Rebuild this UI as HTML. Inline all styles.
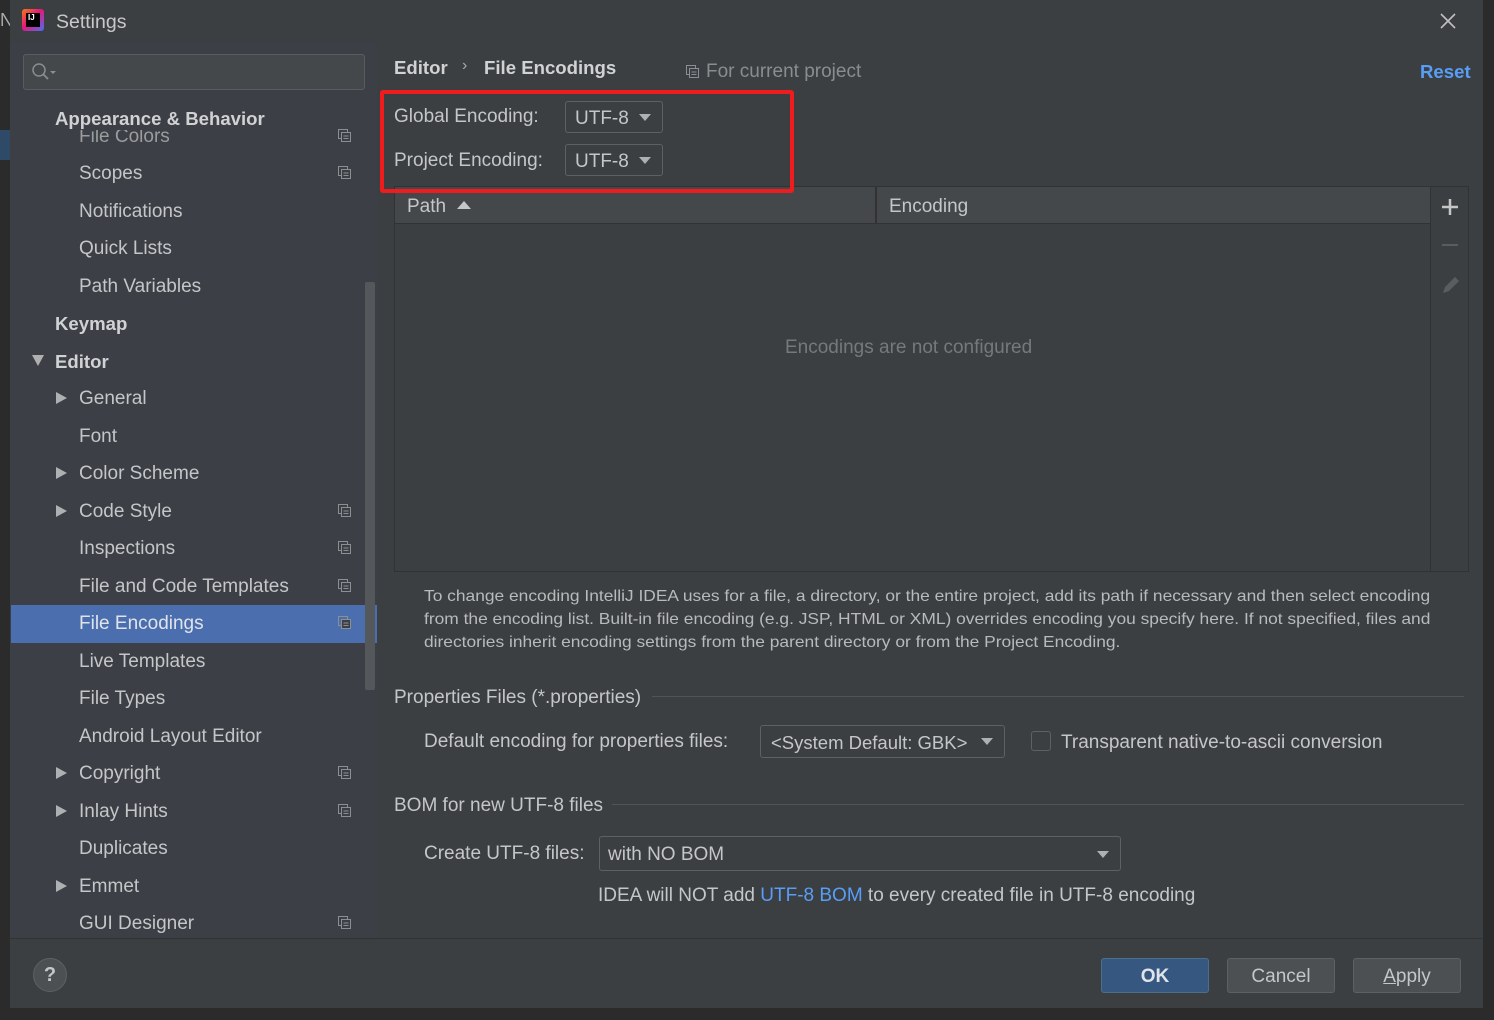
<!DOCTYPE html>
<html><head><meta charset="utf-8"><style>
*{margin:0;padding:0;box-sizing:border-box}
body{width:1494px;height:1020px;background:#2b2b2b;font-family:"Liberation Sans","Noto Sans CJK SC",sans-serif;color:#bbbbbb;position:relative;overflow:hidden}
.abs{position:absolute;white-space:nowrap}
#dlg{position:absolute;left:10px;top:0;width:1473px;height:1008px;background:#3c3f41}
#side{position:absolute;left:10px;top:42px;width:367px;height:896px;background:#3c3f45}
.it{position:absolute;font-size:19px;color:#c4c6c8;white-space:nowrap;margin-top:0px}
.hd{font-weight:bold;color:#d0d2d4;font-size:18.6px}
.arr{position:absolute;width:0;height:0;border-top:6px solid transparent;border-bottom:6px solid transparent;border-left:11px solid #aeb0b2}
.darr{position:absolute;width:0;height:0;border-left:6px solid transparent;border-right:6px solid transparent;border-top:11px solid #aeb0b2}
.cp{position:absolute;width:13px;height:13px}
.cb{position:absolute;border:1px solid #5e6164;border-radius:3px;background:#3c3f41}
.tri{position:absolute;width:0;height:0;border-left:6px solid transparent;border-right:6px solid transparent;border-top:7px solid #aeb0b2}
.btn{position:absolute;top:958px;height:35px;border-radius:3px;font-size:19px;text-align:center;line-height:35px}
.t{font-size:19px}
</style></head><body>
<div class="abs" style="left:0;top:10px;font-size:18px;color:#aaa">N</div>
<div style="position:absolute;left:0;top:130px;width:10px;height:30px;background:#2f4a66"></div>
<div id="dlg"></div>
<div id="side"></div>
<!-- title -->
<div style="position:absolute;left:22px;top:9px;width:22px;height:22px;background:linear-gradient(135deg,#f97a12,#e5177b 45%,#4a6ff0);border-radius:3px"></div>
<div style="position:absolute;left:26px;top:13px;width:14px;height:14px;background:#000"></div>
<div class="abs" style="left:28px;top:13px;font-size:8px;font-weight:bold;color:#fff">IJ</div>
<div class="abs" style="left:56px;top:11px;font-size:19.5px;color:#c8c8c8">Settings</div>
<svg class="abs" style="left:1438px;top:11px" width="20" height="20"><path d="M3 3L17 17M17 3L3 17" stroke="#c0c0c0" stroke-width="1.6"/></svg>
<!-- search -->
<div style="position:absolute;left:23px;top:54px;width:342px;height:36px;border:1px solid #5a5d60;border-radius:3px;background:#45484b"></div>
<svg class="abs" style="left:31px;top:62px" width="26" height="20"><circle cx="8" cy="8" r="6" stroke="#8a8d90" stroke-width="1.5" fill="none"/><path d="M12 12L17 17" stroke="#8a8d90" stroke-width="1.8"/><path d="M19 9L25 9L22 12Z" fill="#8a8d90"/></svg>
<!-- sidebar items -->
<div class="it" style="left:79px;top:126px;color:#9a9c9e">File Colors</div>
<div style="position:absolute;left:10px;top:103px;width:350px;height:27px;background:#3c3f45"></div>
<div class="it hd" style="left:55px;top:108px">Appearance &amp; Behavior</div>
<div class="it" style="left:79px;top:163px">Scopes</div>
<div class="it" style="left:79px;top:201px">Notifications</div>
<div class="it" style="left:79px;top:238px">Quick Lists</div>
<div class="it" style="left:79px;top:276px">Path Variables</div>
<div class="it hd" style="left:55px;top:313px">Keymap</div>
<div class="darr" style="left:32px;top:355px"></div>
<div class="it hd" style="left:55px;top:351px">Editor</div>
<div class="arr" style="left:56px;top:392px"></div><div class="it" style="left:79px;top:388px">General</div>
<div class="it" style="left:79px;top:426px">Font</div>
<div class="arr" style="left:56px;top:467px"></div><div class="it" style="left:79px;top:463px">Color Scheme</div>
<div class="arr" style="left:56px;top:505px"></div><div class="it" style="left:79px;top:501px">Code Style</div>
<div class="it" style="left:79px;top:538px">Inspections</div>
<div class="it" style="left:79px;top:576px">File and Code Templates</div>
<div style="position:absolute;left:11px;top:605px;width:366px;height:38px;background:#4b6eaf"></div>
<div class="it" style="left:79px;top:613px;color:#e0e4ea">File Encodings</div>
<div class="it" style="left:79px;top:651px">Live Templates</div>
<div class="it" style="left:79px;top:688px">File Types</div>
<div class="it" style="left:79px;top:726px">Android Layout Editor</div>
<div class="arr" style="left:56px;top:767px"></div><div class="it" style="left:79px;top:763px">Copyright</div>
<div class="arr" style="left:56px;top:805px"></div><div class="it" style="left:79px;top:801px">Inlay Hints</div>
<div class="it" style="left:79px;top:838px">Duplicates</div>
<div class="arr" style="left:56px;top:880px"></div><div class="it" style="left:79px;top:876px">Emmet</div>
<div class="it" style="left:79px;top:913px">GUI Designer</div>
<!-- copy icons -->
<svg width="0" height="0" style="position:absolute"><defs><g id="ci"><rect x="0.5" y="0.5" width="9" height="9" fill="none" stroke="#8c8f92"/><rect x="3.5" y="3.5" width="9" height="9" fill="#3c3f45" stroke="#8c8f92"/><path d="M5.5 7h5M5.5 9.5h5" stroke="#8c8f92"/></g></defs></svg>
<svg class="cp" style="left:338px;top:129px"><use href="#ci"/></svg>
<svg class="cp" style="left:338px;top:166px"><use href="#ci"/></svg>
<svg class="cp" style="left:338px;top:504px"><use href="#ci"/></svg>
<svg class="cp" style="left:338px;top:541px"><use href="#ci"/></svg>
<svg class="cp" style="left:338px;top:579px"><use href="#ci"/></svg>
<svg class="cp" style="left:338px;top:616px"><use href="#ci"/></svg>
<svg class="cp" style="left:338px;top:766px"><use href="#ci"/></svg>
<svg class="cp" style="left:338px;top:804px"><use href="#ci"/></svg>
<svg class="cp" style="left:338px;top:916px"><use href="#ci"/></svg>
<!-- sidebar scrollbar -->
<div style="position:absolute;left:365px;top:282px;width:10px;height:408px;background:#55585b;border-radius:2px"></div>
<!-- header -->
<div class="abs" style="left:394px;top:57px;font-size:18.6px;font-weight:bold;color:#d0d2d4">Editor</div>
<div class="abs" style="left:462px;top:57px;font-size:16px;color:#aaa">›</div>
<div class="abs" style="left:484px;top:57px;font-size:18.6px;font-weight:bold;color:#d0d2d4">File Encodings</div>
<svg class="cp" style="left:686px;top:65px"><use href="#ci"/></svg>
<div class="abs t" style="left:706px;top:61px;color:#8a8d90">For current project</div>
<div class="abs" style="left:1420px;top:61px;font-size:18.6px;font-weight:bold;color:#589df6">Reset</div>
<!-- encodings -->
<div class="abs t" style="left:394px;top:106px;color:#c4c6c8">Global Encoding:</div>
<div class="cb" style="left:565px;top:101px;width:98px;height:32px"></div>
<div class="abs t" style="left:575px;top:108px;color:#c4c6c8">UTF-8</div>
<div class="tri" style="left:639px;top:114px"></div>
<div class="abs t" style="left:394px;top:150px;color:#c4c6c8">Project Encoding:</div>
<div class="cb" style="left:565px;top:144px;width:98px;height:32px"></div>
<div class="abs t" style="left:575px;top:151px;color:#c4c6c8">UTF-8</div>
<div class="tri" style="left:639px;top:157px"></div>
<!-- table -->
<div style="position:absolute;left:394px;top:186px;width:1075px;height:386px;border:1px solid #323232;background:#3c3f41"></div>
<div style="position:absolute;left:395px;top:187px;width:1035px;height:37px;background:#45484a;border-bottom:1px solid #323232"></div>
<div style="position:absolute;left:875px;top:187px;width:2px;height:37px;background:#323232"></div>
<div style="position:absolute;left:1430px;top:187px;width:1px;height:384px;background:#323232"></div>
<div class="abs t" style="left:407px;top:196px;color:#c4c6c8">Path</div>
<div style="position:absolute;left:457px;top:201px;width:0;height:0;border-left:7px solid transparent;border-right:7px solid transparent;border-bottom:8px solid #c4c6c8"></div>
<div class="abs t" style="left:889px;top:196px;color:#c4c6c8">Encoding</div>
<svg class="abs" style="left:1440px;top:197px" width="20" height="20"><path d="M10 2V18M2 10H18" stroke="#c4c6c8" stroke-width="2.5"/></svg>
<div style="position:absolute;left:1442px;top:244px;width:16px;height:2px;background:#5a5d60"></div>
<svg class="abs" style="left:1440px;top:274px" width="22" height="22"><path d="M3 19L5 13L15 3L19 7L9 17Z" fill="#5a5d60"/></svg>
<div class="abs t" style="left:785px;top:337px;color:#76797c">Encodings are not configured</div>
<div style="position:absolute;left:380px;top:90px;width:414px;height:103px;border:4px solid #ee1c1c;border-radius:3px"></div>
<!-- paragraph -->
<div class="abs" style="left:424px;top:585px;font-size:16px;line-height:23px;color:#b8babc;transform:scaleX(1.086);transform-origin:0 0">To change encoding IntelliJ IDEA uses for a file, a directory, or the entire project, add its path if necessary and then select encoding<br>from the encoding list. Built-in file encoding (e.g. JSP, HTML or XML) overrides encoding you specify here. If not specified, files and<br>directories inherit encoding settings from the parent directory or from the Project Encoding.</div>
<!-- properties -->
<div class="abs t" style="left:394px;top:687px;color:#c4c6c8">Properties Files (*.properties)</div>
<div style="position:absolute;left:652px;top:696px;width:812px;height:1px;background:#515456"></div>
<div class="abs t" style="left:424px;top:731px;color:#c4c6c8">Default encoding for properties files:</div>
<div class="cb" style="left:760px;top:725px;width:245px;height:33px"></div>
<div class="abs" style="left:771px;top:732px;font-size:18.5px;color:#c4c6c8">&lt;System Default: GBK&gt;</div>
<div class="tri" style="left:981px;top:738px"></div>
<div class="cb" style="left:1031px;top:731px;width:20px;height:20px"></div>
<div class="abs t" style="left:1061px;top:732px;color:#c4c6c8">Transparent native-to-ascii conversion</div>
<div class="abs t" style="left:394px;top:795px;color:#c4c6c8">BOM for new UTF-8 files</div>
<div style="position:absolute;left:612px;top:804px;width:852px;height:1px;background:#515456"></div>
<div class="abs t" style="left:424px;top:843px;color:#c4c6c8">Create UTF-8 files:</div>
<div class="cb" style="left:599px;top:836px;width:522px;height:35px"></div>
<div class="abs t" style="left:608px;top:844px;color:#c4c6c8">with NO BOM</div>
<div class="tri" style="left:1097px;top:851px"></div>
<div class="abs t" style="left:598px;top:885px;color:#c4c6c8">IDEA will NOT add <span style="color:#589df6">UTF-8 BOM</span> to every created file in UTF-8 encoding</div>
<!-- footer -->
<div style="position:absolute;left:10px;top:938px;width:1473px;height:1px;background:#323232"></div>
<div style="position:absolute;left:33px;top:958px;width:34px;height:34px;border-radius:50%;background:#4c5052;border:1px solid #5e6164;color:#c4c6c8;font-size:20px;font-weight:bold;text-align:center;line-height:32px">?</div>
<div class="btn" style="left:1101px;width:108px;background:#365880;border:1px solid #4c708c;color:#e0e4ea;font-weight:bold">OK</div>
<div class="btn" style="left:1227px;width:108px;background:#4c5052;border:1px solid #5e6164;color:#c4c6c8">Cancel</div>
<div class="btn" style="left:1353px;width:108px;background:#4c5052;border:1px solid #5e6164;color:#c4c6c8"><u>A</u>pply</div>
</body></html>
